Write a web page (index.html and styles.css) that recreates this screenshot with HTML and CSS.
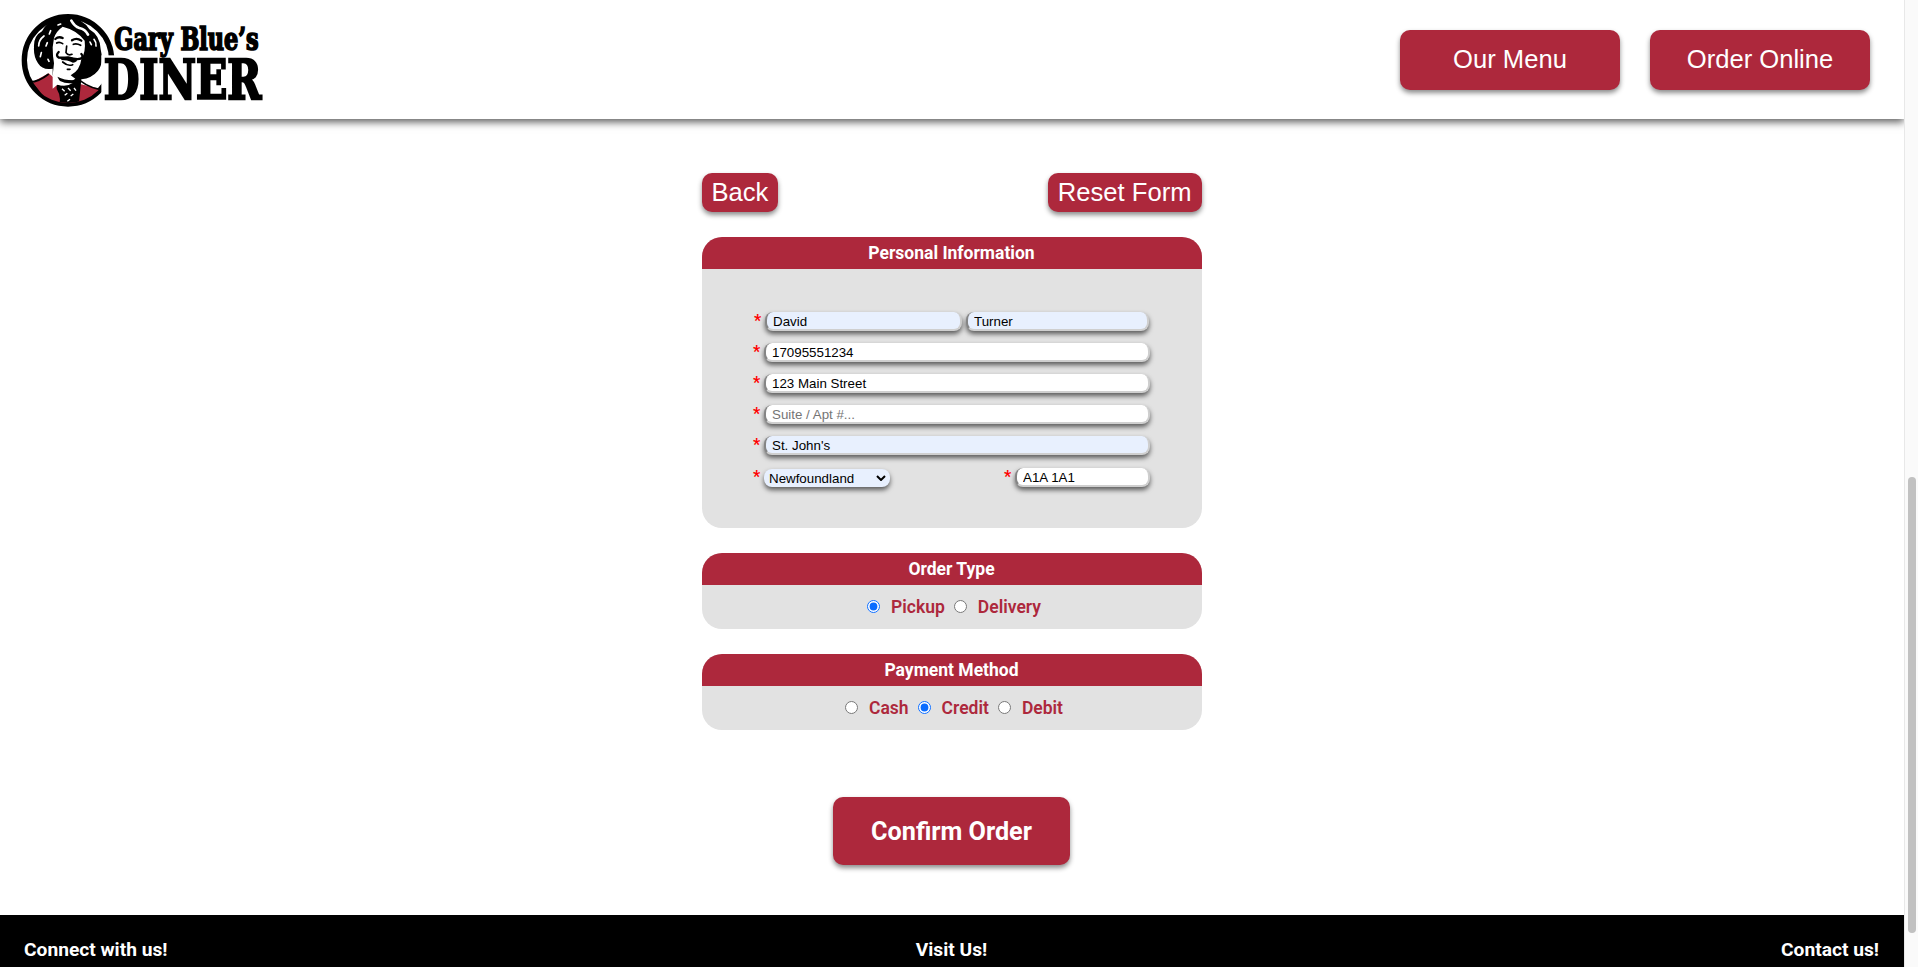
FILE: index.html
```html
<!DOCTYPE html>
<html lang="en">
<head>
<meta charset="utf-8">
<title>Gary Blue's Diner</title>
<link rel="stylesheet" href="styles.css">
</head>
<body>
<div class="page">
  <header class="header">
    <svg class="logo" viewBox="0 0 750 300" role="img" aria-label="Gary Blue's Diner">
      <defs><clipPath id="disc"><circle cx="150" cy="151" r="128"/></clipPath></defs>
      <circle cx="150" cy="151" r="131" fill="#fff" stroke="#000" stroke-width="16"/>
      <g clip-path="url(#disc)">
        <path fill="#ad283c" d="M44 216 L92 190 L118 212 Q124 250 152 262 Q178 254 186 222 L250 238 L262 252 L200 290 L100 290 Z"/>
        <path fill="none" stroke="#000" stroke-width="5" d="M36 216 Q62 216 92 192 M262 240 Q220 238 186 212"/>
        <path fill="#000" d="M48 112 Q46 78 72 64 Q90 26 136 26 Q190 18 214 58 Q246 76 248 118 Q258 160 240 182 Q222 204 190 208 L172 226 L130 216 L104 196 L104 176 Q74 182 60 160 Q46 138 48 112 Z"/>
        <path fill="#fff" d="M108 84 Q114 64 134 50 Q176 60 200 92 Q204 124 190 148 Q186 182 158 196 L172 206 Q150 222 120 212 L104 196 L108 160 Q104 140 104 112 Z"/>
        <path fill="#000" d="M118 200 Q150 216 190 208 L182 286 L122 286 Q132 262 116 236 L116 224 L132 226 Z"/>
        <path fill="#fff" d="M104 194 Q128 224 164 219 Q146 232 118 224 L104 236 Z"/>
        <path fill="none" stroke="#fff" stroke-width="8" stroke-linecap="round" d="M160 32 Q170 50 184 54 Q202 58 210 74"/>
        <path fill="none" stroke="#fff" stroke-width="5" stroke-linecap="round" d="M62 108 Q62 90 78 78 M70 128 L67 140 M88 98 L84 108 M98 62 L94 72 M228 88 Q236 98 234 108 M216 96 L220 104 M90 148 L93 154 M120 45 L128 42"/>
        <path fill="none" stroke="#fff" stroke-width="4" d="M132 236 l8 8 m10 -10 l8 8 m10 -8 l6 8 M140 256 l8 -6 m10 8 l8 -6 M148 274 l8 -6"/>
        <path fill="none" stroke="#000" stroke-width="7" stroke-linecap="round" d="M112 87 Q122 78 134 84 M162 91 Q176 82 190 92"/>
        <path fill="none" stroke="#000" stroke-width="5" stroke-linecap="round" d="M116 99 Q124 94 134 101 M166 103 Q176 99 188 106 M146 108 L144 128 Q150 138 162 133"/>
        <path fill="none" stroke="#000" stroke-width="7" stroke-linecap="round" d="M122 126 Q112 136 122 143 Q136 144 150 142 Q176 150 188 146 Q198 140 190 132"/>
        <path fill="#000" d="M128 150 Q138 138 150 142 Q166 140 178 152 Q166 162 160 156 Q150 150 128 150 Z"/>
        <path fill="none" stroke="#000" stroke-width="5" stroke-linecap="round" d="M134 156 Q150 170 164 164 M148 178 L156 178"/>
      </g>
      <path fill="#fff" d="M250 136 H300 V275 H250 Z"/>
      <text class="logo-name" x="289" y="120" textLength="433" lengthAdjust="spacingAndGlyphs">Gary Blue’s</text>
      <text class="logo-diner" x="257" y="266" textLength="473" lengthAdjust="spacingAndGlyphs">DINER</text>
    </svg>
    <nav class="nav">
      <button class="btn nav-btn">Our Menu</button>
      <button class="btn nav-btn">Order Online</button>
    </nav>
  </header>

  <main class="main">
    <form class="form">
      <div class="actions">
        <button type="button" class="btn small-btn back-btn">Back</button>
        <button type="button" class="btn small-btn">Reset Form</button>
      </div>

      <section class="card">
        <h2 class="card-title">Personal Information</h2>
        <div class="fields">
          <div class="row name-row">
            <span class="star">*</span>
            <input class="field first filled" value="David">
            <input class="field last filled" value="Turner">
          </div>
          <div class="row"><span class="star">*</span><input class="field" value="17095551234"></div>
          <div class="row"><span class="star">*</span><input class="field" value="123 Main Street"></div>
          <div class="row"><span class="star">*</span><input class="field" placeholder="Suite / Apt #..."></div>
          <div class="row"><span class="star">*</span><input class="field filled" value="St. John's"></div>
          <div class="row region-row">
            <span class="star">*</span>
            <div class="province">Newfoundland
              <svg class="chevron" viewBox="0 0 10 6"><path d="M1 1 L5 5 L9 1"/></svg>
            </div>
            <span class="star postal-star">*</span>
            <input class="field postal" value="A1A 1A1">
          </div>
        </div>
      </section>

      <section class="card">
        <h2 class="card-title">Order Type</h2>
        <div class="options">
          <label class="option"><input type="radio" name="type" checked>Pickup</label>
          <label class="option"><input type="radio" name="type">Delivery</label>
        </div>
      </section>

      <section class="card">
        <h2 class="card-title">Payment Method</h2>
        <div class="options">
          <label class="option"><input type="radio" name="pay">Cash</label>
          <label class="option"><input type="radio" name="pay" checked>Credit</label>
          <label class="option"><input type="radio" name="pay">Debit</label>
        </div>
      </section>

      <button type="button" class="btn confirm">Confirm Order</button>
    </form>
  </main>

  <footer class="footer">
    <h3>Connect with us!</h3>
    <h3>Visit Us!</h3>
    <h3>Contact us!</h3>
  </footer>
</div>
<div class="scrollbar"><div class="thumb"></div></div>
</body>
</html>
```
FILE: styles.css
```css
* { box-sizing: border-box; }

body {
  margin: 0;
  height: 967px;
  display: flex;
  overflow: hidden;
  background: #fff;
  font-family: Roboto, sans-serif;
}

.page {
  width: 1904px;
  height: 967px;
  display: flex;
  flex-direction: column;
  overflow: hidden;
}

.header {
  height: 119px;
  flex: none;
  display: flex;
  justify-content: space-between;
  padding: 10px 34px 0 18px;
  box-shadow: 0 3px 8px rgba(0, 0, 0, 0.65);
}

.logo { width: 250px; height: 100px; overflow: visible; }

.logo-name,
.logo-diner {
  font-family: "DejaVu Serif Condensed", "DejaVu Serif", serif;
  font-weight: 700;
  fill: #000;
  stroke: #000;
}
.logo-name { font-size: 93px; stroke-width: 5px; }
.logo-diner { font-size: 165px; stroke-width: 7px; }

.nav { display: flex; gap: 30px; padding-top: 20px; }

.btn {
  border: 0;
  padding: 0;
  color: #fff;
  background: #ad283c;
  border-radius: 10px;
  box-shadow: 0 3px 5px rgba(0, 0, 0, 0.45);
  font-family: "Liberation Sans", Arial, sans-serif;
  font-size: 25.6px;
}

.nav-btn { width: 220px; height: 60px; padding-bottom: 2px; }

.main { flex: none; height: 796px; display: flex; justify-content: center; }

.form {
  width: 500px;
  padding-top: 54px;
  display: flex;
  flex-direction: column;
}

.actions { display: flex; justify-content: space-between; margin-bottom: 25px; }
.small-btn { height: 39px; padding: 0 10.5px 0 10px; }
.back-btn { padding: 0 9.5px; }

.card {
  margin-bottom: 25px;
  border-radius: 20px;
  overflow: hidden;
  background: #e2e2e2;
}

.card-title {
  margin: 0;
  height: 32px;
  line-height: 32px;
  color: #fff;
  background: #ad283c;
  text-align: center;
  font-size: 17.5px;
  font-weight: 700;
  padding-right: 1px;
}

.fields {
  height: 259px;
  padding: 43px 52px 0 51px;
  display: flex;
  flex-direction: column;
  gap: 12.1px;
}

.row { display: flex; height: 19px; }
.name-row { padding-left: 1px; }
.region-row { margin-top: 0.6px; }

.star {
  width: 11px;
  flex: none;
  color: #f00;
  font-size: 16px;
  font-weight: 700;
  line-height: 17px;
}

.field {
  flex: 1;
  min-width: 0;
  height: 19px;
  padding: 1px 6px 0;
  background: #fff;
  border: 0 solid #cfcfcf;
  border-width: 0 2px 2px;
  border-left-color: #858585;
  border-radius: 8px;
  box-shadow: 0 3px 5px rgba(0, 0, 0, 0.6);
  color: #000;
  font-family: "Liberation Sans", Arial, sans-serif;
  font-size: 13.33px;
}
.field::placeholder { color: #757575; }
.filled { background: #e8f0fe; }
.first { flex: 0 0 197px; margin-right: 4px; }
.last { flex: 0 0 183px; }

.province {
  width: 126px;
  height: 18px;
  margin-top: 1px;
  padding: 0 4px 0 5px;
  display: flex;
  align-items: center;
  justify-content: space-between;
  background: #e8f0fe;
  border-radius: 8px;
  box-shadow: 0 3px 5px rgba(0, 0, 0, 0.6);
  font-family: "Liberation Sans", Arial, sans-serif;
  font-size: 13.33px;
}
.chevron { width: 10px; height: 6px; fill: none; stroke: #000; stroke-width: 2; }
.postal-star { margin-left: auto; width: 11px; }
.postal { flex: 0 0 135px; }

.options {
  height: 44px;
  display: flex;
  justify-content: center;
  align-items: center;
  gap: 4px;
  padding: 0 1px 1px 0;
}

.option {
  display: flex;
  align-items: center;
  color: #ad283c;
  font-size: 17.5px;
  font-weight: 600;
}
.option input { margin: 0 11px 0 5px; width: 13px; height: 13px; accent-color: #0a6cff; }

.confirm {
  width: 237px;
  height: 68px;
  margin: 42px 0 0 131px;
  font-family: Roboto, sans-serif;
  font-size: 25.2px;
  font-weight: 700;
}

.footer {
  flex: none;
  height: 52px;
  display: grid;
  grid-template-columns: 1fr 1fr 1fr;
  padding: 24px 25px 0 24px;
  background: #000;
  color: #fff;
}
.footer h3 { margin: 0; font-size: 19.2px; line-height: 22px; }
.footer h3:nth-child(2) { text-align: center; }
.footer h3:nth-child(3) { text-align: right; }

.scrollbar {
  width: 14px;
  height: 967px;
  padding: 477px 2px 0 3px;
  background: #fafafa;
  border-left: 1px solid #e8e8e8;
}
.thumb { height: 456px; border-radius: 4px; background: #c1c1c1; }
```
